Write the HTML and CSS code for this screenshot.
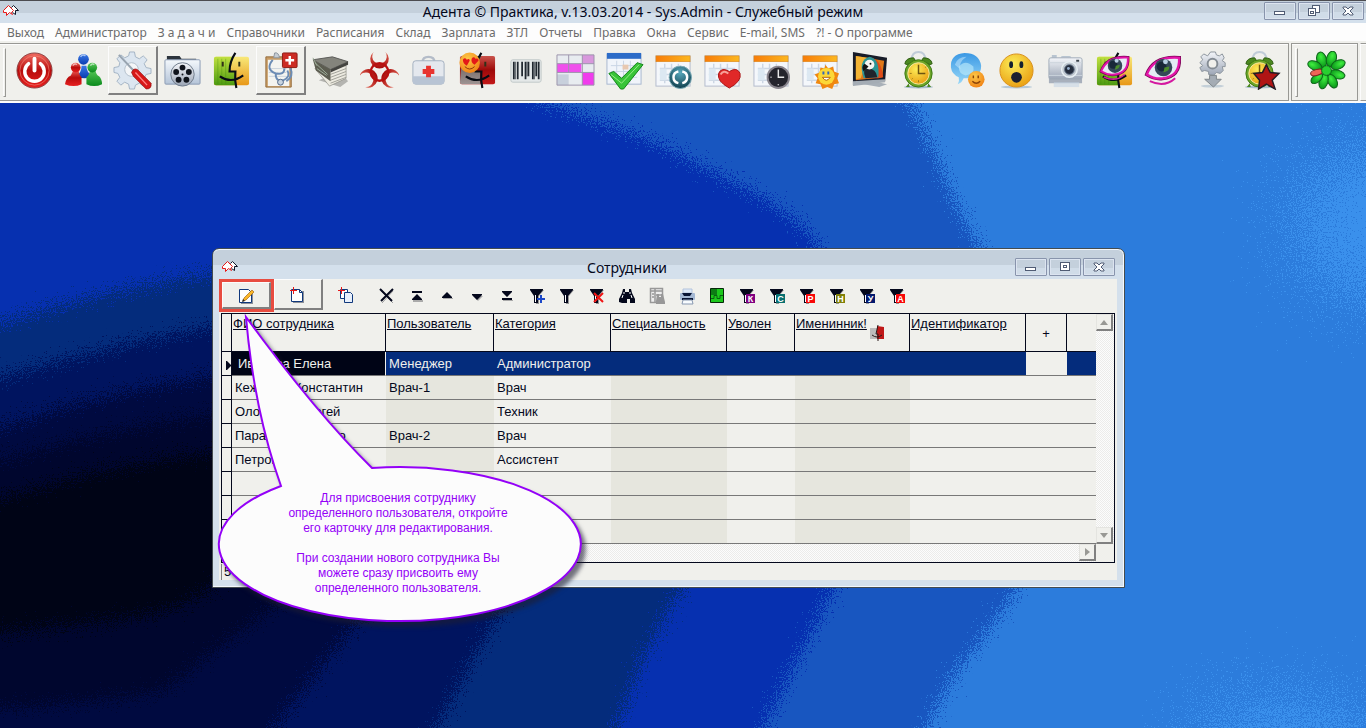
FILE: index.html
```html
<!DOCTYPE html>
<html lang="ru">
<head>
<meta charset="utf-8">
<title>Адента © Практика</title>
<link rel="stylesheet" href="styles.css">
</head>
<body>
<svg class="defs" width="0" height="0" aria-hidden="true">
  <defs>
    <linearGradient id="gRed" x1="0" y1="0" x2="0" y2="1"><stop offset="0" stop-color="#f06a60"/><stop offset=".5" stop-color="#b80c0c"/><stop offset="1" stop-color="#e82020"/></linearGradient>
    <linearGradient id="gBio" x1="0" y1="0" x2="0" y2="1"><stop offset="0" stop-color="#e06858"/><stop offset="1" stop-color="#a80808"/></linearGradient>
    <linearGradient id="gBlue" x1="0" y1="0" x2="0" y2="1"><stop offset="0" stop-color="#3a7ae8"/><stop offset="1" stop-color="#0a3cb0"/></linearGradient>
    <linearGradient id="gGreen" x1="0" y1="0" x2="0" y2="1"><stop offset="0" stop-color="#58c858"/><stop offset="1" stop-color="#0a8a1c"/></linearGradient>
    <linearGradient id="gSteel" x1="0" y1="0" x2="0" y2="1"><stop offset="0" stop-color="#f4f6fa"/><stop offset="1" stop-color="#9aa4b4"/></linearGradient>
    <linearGradient id="gFolder" x1="0" y1="0" x2="0" y2="1"><stop offset="0" stop-color="#f4f8fc"/><stop offset="1" stop-color="#b4c4d8"/></linearGradient>
    <linearGradient id="gLime" x1="0" y1="0" x2="0" y2="1"><stop offset="0" stop-color="#c0e040"/><stop offset="1" stop-color="#4c9a10"/></linearGradient>
    <linearGradient id="gGold" x1="0" y1="0" x2="0" y2="1"><stop offset="0" stop-color="#f8e878"/><stop offset="1" stop-color="#e89818"/></linearGradient>
    <linearGradient id="gDark" x1="0" y1="0" x2="0" y2="1"><stop offset="0" stop-color="#6a6660"/><stop offset="1" stop-color="#b8b8b8"/></linearGradient>
    <linearGradient id="gOrange" x1="0" y1="0" x2="1" y2="0"><stop offset="0" stop-color="#f87c08"/><stop offset="1" stop-color="#fcb820"/></linearGradient>
    <radialGradient id="gSmile" cx=".4" cy=".3" r=".8"><stop offset="0" stop-color="#fcec58"/><stop offset="1" stop-color="#e8980c"/></radialGradient>
    <radialGradient id="gLove" cx=".4" cy=".3" r=".8"><stop offset="0" stop-color="#fcc848"/><stop offset="1" stop-color="#f07c10"/></radialGradient>
    <radialGradient id="gTeal" cx=".5" cy=".3" r=".8"><stop offset="0" stop-color="#58a8bc"/><stop offset="1" stop-color="#06303e"/></radialGradient>
    <linearGradient id="gChat" x1="0" y1="0" x2="0" y2="1"><stop offset="0" stop-color="#3a98e4"/><stop offset="1" stop-color="#98d8f8"/></linearGradient>
    <radialGradient id="gClover" cx=".5" cy=".3" r=".7"><stop offset="0" stop-color="#40f040"/><stop offset="1" stop-color="#089418"/></radialGradient>
    <filter id="grain" x="0" y="0" width="1" height="1" color-interpolation-filters="sRGB">
      <feTurbulence type="fractalNoise" baseFrequency=".8" numOctaves="2" seed="3"/>
      <feDisplacementMap in="SourceGraphic" scale="56" xChannelSelector="R" yChannelSelector="G"/>
    </filter>
    <filter id="speckle" x="-.2" y="-.2" width="1.4" height="1.4" color-interpolation-filters="sRGB">
      <feTurbulence type="fractalNoise" baseFrequency=".8" numOctaves="2" seed="8"/>
      <feDisplacementMap in="SourceGraphic" scale="240" xChannelSelector="R" yChannelSelector="G"/>
    </filter>
  </defs>
  <symbol id="arrows" viewBox="0 0 18 14">
    <path d="M9.500 3.500l2-2 5 5h-3v4l-3-2" fill="#fff" stroke="#101828"/>
    <path d="M6.500 1.500l5 5-2 2 1 2-3-2-3 3v-3h-3v-2z" fill="#fff" stroke="#e81818"/>
  </symbol>
  <symbol id="face" viewBox="0 0 40 40">
    <path d="M24 2q-6 9-6 19h6q-1 9 1 17M8 26q12 8 24-1" fill="none" stroke="#080c14" stroke-width="2.200"/>
    <path d="M11 11v5M28 11v5" stroke="#303018" stroke-width="2"/>
  </symbol>
  <symbol id="finder" viewBox="0 0 40 40">
    <rect x="2" y="6" width="36" height="29" rx="2" fill="url(#gGold)"/>
    <path d="M4 6h19q-5 8-5 15h6q-1 8 0 14H4q-2 0-2-2V8q0-2 2-2z" fill="url(#gLime)"/>
    <path d="M6 8v26M10 8v26M14 8v26" stroke="#3c8408" stroke-opacity=".35"/>
  </symbol>
  <symbol id="calendar" viewBox="0 0 40 40">
    <rect x="2" y="5" width="35" height="31" fill="#f4f7fb" stroke="#b4bccc"/>
    <rect x="2" y="5" width="35" height="6" fill="url(#gOrange)" stroke="#d88820" stroke-width=".6"/>
    <path d="M6 18h27M6 24h27M6 30h27M11 13v20M18 13v20M25 13v20" stroke="#ccd6e4" stroke-width="1.5"/>
    <path d="M6 18h7v12H6z" fill="#dce8f2"/>
  </symbol>
  <symbol id="alarm" viewBox="0 0 40 40">
    <ellipse cx="20" cy="37" rx="15" ry="1.5" fill="#a8bccc"/>
    <path d="M13 9q0-8 7-8t7 8" fill="none" stroke="#c0ccd8" stroke-width="2"/>
    <path d="M6 13q1-6 9-6l2 3-9 4zM34 13q-1-6-9-6l-2 3 9 4z" fill="#4c8820" stroke="#2c5c10"/>
    <path d="M10 33l-3 4h4M30 33l3 4h-4" fill="#4c8820"/>
    <circle cx="20" cy="23" r="14" fill="#6ca428" stroke="#3c7814"/>
    <circle cx="20" cy="23" r="11" fill="url(#gSmile)" stroke="#f8e8a0"/>
    <path d="M20 14v9h7" fill="none" stroke="#6c5410" stroke-width="1.5"/>
    <path d="M20 30v2M11 23h2M27 17l1-1M13 29l1-1" stroke="#987818"/>
  </symbol>
  <symbol id="eye" viewBox="0 0 40 40">
    <path d="M3 24Q10 5 36 7q1 19-17 21Q11 29 3 24z" fill="#fff" stroke="#7c0858" stroke-width="4"/>
    <path d="M3 24Q10 5 36 7q1 19-17 21Q11 29 3 24z" fill="#e4ecf4" stroke="#e414a8" stroke-width="2.4"/>
    <circle cx="20" cy="17" r="9" fill="#344858"/>
    <circle cx="18" cy="16" r="5" fill="#182838"/><path d="M20 22q6-1 6-6l-5 1z" fill="#4c8c2c"/>
    <circle cx="22" cy="11" r="2.5" fill="#b8d0e4"/>
    <path d="M6 31q15 7 26-3" fill="none" stroke="#d418a0" stroke-width="2"/>
  </symbol>
  <symbol id="funnel" viewBox="0 0 20 20">
    <path d="M4 4h13l-5 6v8H9v-8z" fill="#989898"/>
    <path d="M3 3h13v1l-5 6v7H7v-7L3 4z" fill="#04081c"/>
    <path d="M8.500 9v7" stroke="#fff"/>
  </symbol>
  <symbol id="minimize" viewBox="0 0 30 16"><rect x="9.500" y="8.500" width="10" height="3" fill="#fff" stroke="#505c74"/></symbol>
  <symbol id="close" viewBox="0 0 30 16"><path d="M10 4h3l2 2 2-2h3v1l-3 3 3 3v1h-3l-2-2-2 2h-3v-1l3-3-3-3z" fill="#fff" stroke="#505c74"/></symbol>
</svg>

<header class="titlebar">
  <svg class="app-mark" width="18" height="14"><use href="#arrows"/></svg>
  <h1 class="caption">Адента © Практика, v.13.03.2014 - Sys.Admin - Служебный режим</h1>
  <div class="controls">
    <button class="control" aria-label="Свернуть"><svg width="30" height="16"><use href="#minimize"/></svg></button>
    <button class="control" aria-label="Восстановить"><svg width="30" height="16" viewBox="0 0 30 16" fill="#fff" stroke="#505c74"><rect x="13.500" y="2.500" width="7" height="7"/><rect x="9.500" y="5.500" width="7" height="7"/><rect x="11.500" y="8.500" width="3" height="2"/></svg></button>
    <button class="control" aria-label="Закрыть"><svg width="30" height="16"><use href="#close"/></svg></button>
  </div>
</header>

<nav class="menubar">
  <button>Выход</button><button>Администратор</button><button>З а д а ч и</button><button>Справочники</button><button>Расписания</button><button>Склад</button><button>Зарплата</button><button>ЗТЛ</button><button>Отчеты</button><button>Правка</button><button>Окна</button><button>Сервис</button><button>E-mail, SMS</button><button>?! - О программе</button>
</nav>

<div class="toolbars">
  <div class="toolbar main-tools">
    <span class="grip"></span>
    <button class="tool" aria-label="Выход"><svg viewBox="0 0 40 40"><circle cx="20" cy="20" r="18" fill="url(#gRed)" stroke="#8c4444"/><circle cx="20" cy="20" r="15" fill="none" stroke="#f49080" stroke-opacity=".6"/><path d="M14 13a10 10 0 1 0 12 0" fill="none" stroke="#fff" stroke-width="3.500" stroke-linecap="round"/><path d="M20 8v12" stroke="#fff" stroke-width="4" stroke-linecap="round"/></svg></button>
    <button class="tool" aria-label="Пользователи"><svg viewBox="0 0 40 40"><path d="M13 25q5-3 5-10h5q0 7 6 10-8 6-16 0z" fill="url(#gBlue)"/><circle cx="20" cy="8.500" r="5.500" fill="url(#gBlue)"/><path d="M1 34q1-7 6-9l3-6h5q0 5 3 8v7q-8 4-17 0z" fill="url(#gRed)"/><circle cx="12" cy="17" r="5" fill="url(#gRed)"/><path d="M23 34v-7q3-2 4-8h5q1 6 4 7 3 3 3 8-8 4-16 0z" fill="url(#gGreen)"/><circle cx="29" cy="17" r="5" fill="url(#gGreen)"/><path d="M17 6q2-3 5-1M9 15q2-3 4-1M27 15q2-3 4-1" stroke="#fff" stroke-opacity=".6" fill="none" stroke-width="1.500"/></svg></button>
    <button class="tool raised" aria-label="Настройки"><svg viewBox="0 0 40 40"><path d="M17 1h5l1 5 4 2 4-3 4 4-3 4 2 4 5 1v5l-5 1-2 4 3 4-4 4-4-3-4 2-1 4h-5l-1-5-4-2-4 3-4-4 3-4-2-4-4-1v-5l5-1 1-4-3-4 4-4 4 3 4-2z" fill="#dce6f0" stroke="#a4b4c4"/><circle cx="19" cy="19" r="7" fill="#f4f6f8" stroke="#b4c0cc"/><path d="M6 4l16 17" stroke="#98a4b0" stroke-width="2"/><path d="M19 22q2-5 6-3l14 14q1 6-5 6L21 26z" fill="#d81818" stroke="#8c0c0c" stroke-width=".7"/><path d="M23 22l12 13" stroke="#f88" stroke-width="1.300"/></svg></button>
    <button class="tool" aria-label="Видео"><svg viewBox="0 0 40 40"><path d="M4 5h13l2 3h15v5H4z" fill="#2c343c"/><rect x="2" y="9" width="36" height="25" rx="1" fill="url(#gFolder)" stroke="#8c9cb4"/><circle cx="20" cy="24" r="12" fill="url(#gSteel)" stroke="#707c8c"/><g fill="#10141c"><circle cx="20" cy="17" r="3"/><circle cx="26.500" cy="21.500" r="3"/><circle cx="24" cy="29.500" r="3"/><circle cx="16" cy="29.500" r="3"/><circle cx="13.500" cy="21.500" r="3"/><circle cx="20" cy="24" r="1"/></g></svg></button>
    <button class="tool" aria-label="Снимки"><svg viewBox="0 0 40 40"><use href="#finder"/><use href="#face"/></svg></button>
    <button class="tool raised" aria-label="Медицинская карта"><svg viewBox="0 0 40 40"><path d="M5 6h26v31H5z" fill="#c89c64" stroke="#946c3c"/><path d="M7 9h22v27H7z" fill="#f4f4f0"/><path d="M14 2q4-1 5 5h-6z" fill="#c4ccd4" stroke="#8c949c"/><path d="M8 18h18M8 22h18M8 26h18" stroke="#ccd4dc"/><path d="M12 9Q4 19 15 23q9 2 9-5M15 23q0 9 8 7 8-4 4-10M30 17Q34 26 26 31" fill="none" stroke="#6c8cb4" stroke-width="2"/><circle cx="20" cy="32" r="3" fill="#c8d4e0" stroke="#506888"/><rect x="22" y="2" width="15" height="15" rx="1" fill="#cc2c24" stroke="#8c1c14"/><path d="M29.500 5v9M25 9.500h9" stroke="#fff" stroke-width="2.500"/></svg></button>
    <button class="tool" aria-label="Документы"><svg viewBox="0 0 40 40"><path d="M8 30l22 7 8-6-8-10z" fill="#b4b4b0"/><path d="M4 18l15 18 17-8V15z" fill="#eceae0" stroke="#8c8c84" stroke-width=".7"/><path d="M20 30l16-6M20 33l16-6M20 27l16-6M20 24l16-6" stroke="#a0a098"/><path d="M2 9l20-3 16 5-18 8z" fill="#84847c" stroke="#5c5c58"/><path d="M2 9l18 10v12L5 20z" fill="#5c5c50"/><path d="M20 19l18-8v3l-18 8z" fill="#444440"/><path d="M4 12l13 12M6 18l10 7M2 7l4 8" stroke="#9cac98"/></svg></button>
    <button class="tool" aria-label="Биологическая опасность"><svg viewBox="0 0 40 40"><g fill="url(#gBio)"><path id="horn" d="M14 1A9.500 9.500 0 1 0 26 1 7.500 7.500 0 1 1 14 1z"/><use href="#horn" transform="rotate(120 20 21.500)"/><use href="#horn" transform="rotate(240 20 21.500)"/></g><circle cx="20" cy="21.500" r="9" fill="none" stroke="#b81010" stroke-width="2.500"/><circle cx="20" cy="21.500" r="2.500" fill="#f4e8e4"/></svg></button>
    <button class="tool" aria-label="Аптечка"><svg viewBox="0 0 40 40"><path d="M14 11q0-5 6-5t6 5" fill="none" stroke="#b4bcc8" stroke-width="2.500"/><rect x="4" y="10" width="32" height="24" rx="3" fill="#e4e8ee" stroke="#a4b0c0"/><path d="M4 26h32v5q0 3-3 3H7q-3 0-3-3z" fill="#b8c4d4"/><path d="M20 15v12M14 21h12" stroke="#e83430" stroke-width="5"/></svg></button>
    <button class="tool" aria-label="Настроение"><svg viewBox="0 0 40 40"><rect x="2" y="5" width="36" height="29" rx="2" fill="url(#gRed)"/><path d="M4 5h20q-5 8-5 16h4q-1 8 0 13H4q-2 0-2-2z" fill="url(#gDark)"/><rect x="2" y="5" width="36" height="29" rx="2" fill="#300" opacity=".2"/><use href="#face"/><circle cx="12" cy="12" r="10.500" fill="url(#gLove)"/><path d="M5 9q2-3 4 0 3-2 3 1l-3 5q-4-2-4-6zM14 8q2-3 4 0 3-1 3 2l-4 4q-4-2-3-6z" fill="#e41818"/><path d="M7 16q5 5 10 0" stroke="#8c3408" fill="none"/></svg></button>
    <button class="tool" aria-label="Штрихкод"><svg viewBox="0 0 40 40"><rect x="4" y="9" width="31" height="23" rx="2" fill="#e4e8e8" stroke="#c0c8c8"/><path d="M7 11v18M11 11v18M15.500 11v15M19 11v18M22 11v15M26.500 11v18M30 11v15M32.500 11v18" stroke="#202830" stroke-width="1.800"/><path d="M8.500 11v18M20.500 11v15M28 11v18" stroke="#485058"/></svg></button>
    <button class="tool" aria-label="Таблица"><svg viewBox="0 0 40 40"><rect x="1" y="4" width="38" height="31" fill="#e8ecf0"/><path d="M27 4h12v9H27z" fill="#d898dc"/><path d="M1 13h25v9H1z" fill="#f050ec"/><path d="M27 22h12v13H27z" fill="#f03cec"/><path d="M1 24h12v11H1z" fill="#c8d0dc"/><path d="M1 4h38v31H1zM13 4v18M27 4v31M1 13h38M1 22h38" fill="none" stroke="#9c94ac"/></svg></button>
    <button class="tool" aria-label="Задания"><svg viewBox="0 0 40 40"><rect x="2" y="3" width="35" height="31" fill="#f0f4fa" stroke="#a8b8d0"/><rect x="2" y="2" width="35" height="6" fill="#2c6cc8"/><path d="M6 15h27M6 21h27M6 27h27M12 10v22M19 10v22M26 10v22" stroke="#c8d4e4"/><path d="M18 14h6v5h-6z" fill="#e8c8b0"/><path d="M4 23l5-2 8 7 16-16 6 2-20 25h-3z" fill="#38c438" stroke="#148418"/><path d="M6 24l11 9 18-19" fill="none" stroke="#98ec88"/></svg></button>
    <button class="tool" aria-label="Код"><svg viewBox="0 0 40 40"><use href="#calendar"/><circle cx="27" cy="27" r="11.500" fill="url(#gTeal)" stroke="#7cacb8"/><path d="M25 21q-5 1-5 6t5 6M29 21q5 1 5 6t-5 6" fill="none" stroke="#fff" stroke-width="2.500"/></svg></button>
    <button class="tool" aria-label="Избранное"><svg viewBox="0 0 40 40"><use href="#calendar"/><path d="M27 38Q14 31 16 23q3-7 11-2 8-5 11 2 2 8-11 15z" fill="#e02828" stroke="#a81414"/><path d="M18 24q3-5 8-1" stroke="#f8a098" fill="none" stroke-width="2"/></svg></button>
    <button class="tool" aria-label="Расписание"><svg viewBox="0 0 40 40"><use href="#calendar"/><circle cx="27" cy="27" r="11" fill="#24242c" stroke="#88848c" stroke-width="2"/><path d="M27 19v8h6M27 34v1M19 27h1" stroke="#e8e8e8" fill="none" stroke-width="1.500"/></svg></button>
    <button class="tool" aria-label="Дежурства"><svg viewBox="0 0 40 40"><use href="#calendar"/><path d="M25 14l3 4 5-2 1 5 5 2-2 5 2 5-5 1-2 5-5-2-5 2-2-5-5-1 2-5-3-4 5-2 1-5 4 1z" fill="#f08810"/><circle cx="26" cy="26" r="8.500" fill="#fcd838"/><path d="M22 27q4 6 8 0z" fill="#fff" stroke="#b46408"/><path d="M23 21v3M28 21v3" stroke="#3468b8" stroke-width="2"/></svg></button>
    <button class="tool" aria-label="Монитор"><svg viewBox="0 0 40 40"><path d="M8 33l22 4 8-3-18-4z" fill="#a8b0b8"/><path d="M3 1l35 6-2 24-33 4z" fill="#181c28"/><path d="M3 31l33-2v3L3 36z" fill="#a4acb4"/><path d="M6 5l29 5-2 17L6 30z" fill="#e07818"/><path d="M6 5l12 2-7 21-5 1z" fill="#f4b434"/><path d="M15 28q-5-20 6-21 11 1 13 20l-5 1z" fill="#e04c18"/><path d="M14 28Q8 9 20 6q11 2 9 21z" fill="#2c9494"/><path d="M16 28q-4-9 2-10 9 0 10 9z" fill="#20242c"/><circle cx="20" cy="14" r="5" fill="#f4f4f0"/><path d="M15 13q-4 3-1 8l5-5z" fill="#141414"/><circle cx="21" cy="13" r="1" fill="#141414"/></svg></button>
    <button class="tool" aria-label="Будильник"><svg viewBox="0 0 40 40"><use href="#alarm"/></svg></button>
    <button class="tool" aria-label="Сообщения"><svg viewBox="0 0 40 40"><path d="M3 17Q2 3 17 2q15 0 17 13 0 12-14 13H16q-2 5-6 6 2-3 1-7-7-3-8-10z" fill="url(#gChat)"/><path d="M7 14q3-8 12-8-9 6-6 13z" fill="#b8e0fa" fill-opacity=".6"/><path d="M11 16q7-8 15 0 2 8-8 9-7-1-7-9z" fill="#c0ecfc" opacity=".6"/><circle cx="29" cy="29" r="8.500" fill="url(#gLove)"/><path d="M25 31q4 4 8 0M26 25v3M31 25v3" fill="none" stroke="#8c4408" stroke-width="1.500"/></svg></button>
    <button class="tool" aria-label="Уведомления"><svg viewBox="0 0 40 40"><ellipse cx="20" cy="37" rx="16" ry="1.500" fill="#b4c8d8"/><circle cx="20" cy="20" r="17" fill="url(#gSmile)" stroke="#d8901c"/><ellipse cx="14.500" cy="14" rx="2" ry="3.500" fill="#142030"/><ellipse cx="25" cy="14" rx="2" ry="3.500" fill="#142030"/><circle cx="20" cy="27" r="5.500" fill="#1c2030"/></svg></button>
    <button class="tool" aria-label="Камера"><svg viewBox="0 0 40 40"><path d="M3 28h34v5H3z" fill="#a8b0bc"/><path d="M8 32h26v5H8z" fill="#c4d4e4" opacity=".6"/><path d="M6 4h5v4H6zM15 7q0-2 2-2h7q2 0 2 2z" fill="#b8c4d0"/><rect x="3" y="7" width="34" height="22" rx="2" fill="url(#gSteel)" stroke="#a0acb8"/><path d="M3 12h34M3 25h34" stroke="#ccd4dc"/><path d="M31 9h3v2h-3z" fill="#384048"/><circle cx="24" cy="19" r="8" fill="#c0c8d0" stroke="#e8f0f4" stroke-width="1.500"/><circle cx="24" cy="19" r="5" fill="#242c3c" stroke="#68788c"/><circle cx="23" cy="18" r="1.500" fill="#94acc8"/></svg></button>
    <button class="tool" aria-label="Просмотр снимков"><svg viewBox="0 0 40 40"><use href="#finder"/><use href="#face"/><use href="#eye" x="4" y="1" width="33" height="33"/></svg></button>
    <button class="tool" aria-label="Просмотр"><svg viewBox="0 0 40 40"><use href="#eye"/></svg></button>
    <button class="tool" aria-label="Загрузка"><svg viewBox="0 0 40 40"><ellipse cx="20" cy="36" rx="12" ry="1.500" fill="#c4d0d8"/><path d="M18 1h5l1 3 3 1 3-2 2 4-2 3 3 2v4h-3l1 4-3 3-4-1-3 3-5-1v-3l-4-1-3 1-2-4 3-2-3-3 3-3-2-3 3-3 4 2z" fill="url(#gSteel)" stroke="#8c949c"/><circle cx="20" cy="13" r="5" fill="#f0f0ec" stroke="#848c94" stroke-width="2"/><path d="M17 25h7v4h5l-8 8-9-8h5z" fill="#a4acb4" stroke="#7c8488"/></svg></button>
    <button class="tool" aria-label="Напоминание"><svg viewBox="0 0 40 40"><use href="#alarm" x="-2"/><path d="M25 14l4 8 9 1-7 7 3 9-9-5-8 5 1-9-6-7 9-1z" fill="#b01414" stroke="#241c24" stroke-width="1.500"/></svg></button>
  </div>
  <div class="toolbar side-tools">
    <span class="grip"></span>
    <button class="tool" aria-label="Связь"><svg viewBox="0 0 40 40"><g fill="url(#gClover)" stroke="#0c6418"><ellipse cx="15" cy="9" rx="5" ry="8" transform="rotate(-14 15 9)"/><ellipse cx="25" cy="8" rx="5" ry="8" transform="rotate(16 25 8)"/><ellipse cx="32" cy="14" rx="4.500" ry="7.500" transform="rotate(66 32 14)"/><ellipse cx="31" cy="24" rx="4.500" ry="8" transform="rotate(105 31 24)"/><ellipse cx="26" cy="31" rx="4.500" ry="7.500" transform="rotate(-28 26 31)"/><ellipse cx="17" cy="31" rx="4.500" ry="8" transform="rotate(15 17 31)"/><ellipse cx="8" cy="15" rx="4.500" ry="7.500" transform="rotate(-68 8 15)"/><ellipse cx="10" cy="28" rx="4" ry="7" transform="rotate(50 10 28)"/></g><ellipse cx="10" cy="22" rx="3" ry="6.500" transform="rotate(74 10 22)" fill="#f06458" stroke="#842020"/><circle cx="20" cy="20" r="5" fill="#28d030" stroke="#0c6418"/></svg></button>
  </div>
  <div class="toolbar rest-tools"></div>
</div>

<main class="desktop">
  <svg class="wallpaper" viewBox="0 103 1366 625" preserveAspectRatio="none" aria-hidden="true">
    <g filter="url(#grain)">
      <rect x="-60" y="43" width="1500" height="745" fill="#2c7cdc"/>
      <path d="M-60 40H870L910 103C938 150 948 200 982 250 1050 430 1050 520 1018 587 985 640 945 675 928 728L900 790H-60z" fill="#1856c0"/>
      <path d="M-60 40H450L545 103 650 140 745 188Q795 215 816 242C910 400 865 510 834 587L802 650 763 728 730 790H-60z" fill="#0630b0"/>
      <path d="M-60 341L0 323Q110 288 213 274C500 232 740 390 681 587L646 650 616 728 590 790H-60z" fill="#042c7c"/>
      <path d="M-60 394L0 378Q110 344 213 327C420 292 600 460 492 625L436 728 400 790H-60z" fill="#00145f"/>
      <path d="M-60 445L0 427Q110 390 213 376C390 362 490 500 352 628L274 728 240 790H-60z" fill="#000a40"/>
      <path d="M-60 478L0 460Q100 430 213 414C350 400 400 520 270 610Q200 660 166 690 90 705-60 712z" fill="#00062e"/>
      <path d="M-60 515L0 499Q100 466 213 452C330 442 310 520 214 585 180 615 130 620 0 632H-60z" fill="#000416"/>
    </g>
    <g filter="url(#speckle)" fill="#3a90ec"><ellipse cx="1385" cy="225" rx="86" ry="75"/><ellipse cx="1285" cy="738" rx="90" ry="34"/></g>
  </svg>

  <section class="window" aria-labelledby="staff-title">
    <header class="window-head">
      <svg class="app-mark" width="18" height="14"><use href="#arrows"/></svg>
      <h2 class="caption" id="staff-title">Сотрудники</h2>
      <div class="controls">
        <button class="control" aria-label="Свернуть окно"><svg width="30" height="16"><use href="#minimize"/></svg></button>
        <button class="control" aria-label="Развернуть окно"><svg width="30" height="16" viewBox="0 0 30 16" fill="#fff" stroke="#505c74"><rect x="10.500" y="3.500" width="9" height="8"/><rect x="13.500" y="6.500" width="3" height="2"/></svg></button>
        <button class="control" aria-label="Закрыть окно"><svg width="30" height="16"><use href="#close"/></svg></button>
      </div>
    </header>
    <div class="window-body">
      <div class="actions">
        <div class="highlight"><button class="wide raised" aria-label="Изменить"><svg viewBox="0 0 20 20"><path d="M5 5h12v13H5z" fill="#8c9098"/><path d="M3.500 3.500h9l3 3v10h-12z" fill="#fff" stroke="#10387c"/><path d="M7 15l1-3 8-8 2 2-8 8z" fill="#fcb828" stroke="#a46818" stroke-width=".7"/><path d="M6 16l1-3 2 2z" fill="#222"/></svg></button></div>
        <button class="wide raised" aria-label="Добавить"><svg viewBox="0 0 20 20"><path d="M5 6h11v12H5z" fill="#8c9098"/><path d="M3.500 4.500h8l3 3v9h-11z" fill="#fff" stroke="#10387c"/><path d="M11.500 4.500v3h3" fill="none" stroke="#10387c"/><path d="M5.500 2v7M2 5.500h7" stroke="#e81818"/></svg></button>
        <button class="wide" aria-label="Копировать"><svg viewBox="0 0 20 20"><path d="M4.500 4.500h7v9h-7z" fill="#fff" stroke="#10387c"/><path d="M8.500 7.500h6l2 2v8h-8z" fill="#e8f0fc" stroke="#10387c"/><path d="M5.500 2v7M2 5.500h7" stroke="#e81818"/></svg></button>
        <button class="act" aria-label="Удалить"><svg viewBox="0 0 20 20"><path d="M4 5l12 12M16 5L5 17" stroke="#a0a0a0"/><path d="M3 3l12 12M16 3L4 15" stroke="#04081c" stroke-width="2"/></svg></button>
        <button class="act" aria-label="В начало"><svg viewBox="0 0 20 20"><path d="M6 14h10v2H6z" fill="#aaa"/><path d="M5 5h10v2H5zM10 8l5 5v1H5v-1z" fill="#04081c"/></svg></button>
        <button class="act" aria-label="Вверх"><svg viewBox="0 0 20 20"><path d="M6 12h10v1H6z" fill="#aaa"/><path d="M10 6l5 5v1H5v-1z" fill="#04081c"/></svg></button>
        <button class="act" aria-label="Вниз"><svg viewBox="0 0 20 20"><path d="M6 10h10l-5 5z" fill="#aaa"/><path d="M5 8h10v1l-5 5-5-5z" fill="#04081c"/></svg></button>
        <button class="act" aria-label="В конец"><svg viewBox="0 0 20 20"><path d="M6 14h10v1H6z" fill="#aaa"/><path d="M5 5h10v1l-5 5-5-5zM5 12h10v2H5z" fill="#04081c"/></svg></button>
        <button class="act" aria-label="Добавить фильтр"><svg viewBox="0 0 20 20"><use href="#funnel"/><path d="M14 9v8M10 13h8" stroke="#1c48c8" stroke-width="2"/></svg></button>
        <button class="act" aria-label="Фильтр"><svg viewBox="0 0 20 20"><use href="#funnel"/></svg></button>
        <button class="act" aria-label="Снять фильтр"><svg viewBox="0 0 20 20"><use href="#funnel"/><path d="M7 7l9 9M16 7l-9 9" stroke="#f01414" stroke-width="2"/></svg></button>
        <button class="act" aria-label="Найти"><svg viewBox="0 0 20 20"><path d="M6 3h2v3h4V3h2l1 4 3 6v4h-5v-4h-3v4H5l-3-1v-3l3-6z" fill="#04081c"/><path d="M7 6v2M13 6v2M5 12l1-3M14 9l1 3" stroke="#fff"/></svg></button>
        <button class="act" aria-label="Найти в таблице" disabled><svg viewBox="0 0 20 20"><path d="M3.500 2.500h12v14h-12zM4 5h11M8 3v13M9 9h5M5 8h2M5 11h2" fill="#eee" stroke="#989898" stroke-width="1.500"/><path d="M10 8h2v3h2V8h2l2 8v2H9v-3z" fill="#989898"/></svg></button>
        <button class="act" aria-label="Печать"><svg viewBox="0 0 20 20"><path d="M6 3h9v4H6z" fill="#dce8f8" stroke="#b4c4dc"/><rect x="3" y="7" width="15" height="7" rx="1" fill="#a4b8d4"/><path d="M5 7h10l-2 3H7zM5 12h11v2H5z" fill="#081434"/><path d="M6 14h9l1 4H5z" fill="#f8fcff" stroke="#8898b0"/></svg></button>
        <button class="act" aria-label="График"><svg viewBox="0 0 20 20"><path d="M3.500 2.500h13v14h-13z" fill="#1cc81c" stroke="#042808"/><path d="M4 3h6v6H4z" fill="#0c7c14"/><path d="M4 12.500h3v-3h3v3h3v-3h3" fill="none" stroke="#086010"/></svg></button>
        <button class="act" aria-label="Фильтр К"><svg viewBox="0 0 20 20"><use href="#funnel"/><rect x="9" y="8" width="9" height="9" fill="#800080"/><text x="13.500" y="16">К</text></svg></button>
        <button class="act" aria-label="Фильтр С"><svg viewBox="0 0 20 20"><use href="#funnel"/><rect x="9" y="8" width="9" height="9" fill="#087070"/><text x="13.500" y="16">С</text></svg></button>
        <button class="act" aria-label="Фильтр Р"><svg viewBox="0 0 20 20"><use href="#funnel"/><rect x="9" y="8" width="9" height="9" fill="#f80808"/><text x="13.500" y="16">Р</text></svg></button>
        <button class="act" aria-label="Фильтр Н"><svg viewBox="0 0 20 20"><use href="#funnel"/><rect x="9" y="8" width="9" height="9" fill="#808008"/><text x="13.500" y="16">Н</text></svg></button>
        <button class="act" aria-label="Фильтр У"><svg viewBox="0 0 20 20"><use href="#funnel"/><rect x="9" y="8" width="9" height="9" fill="#04186c"/><text x="13.500" y="16">У</text></svg></button>
        <button class="act" aria-label="Фильтр А"><svg viewBox="0 0 20 20"><use href="#funnel"/><rect x="9" y="8" width="9" height="9" fill="#f80808"/><text x="13.500" y="16">А</text></svg></button>
      </div>

      <div class="grid">
        <table class="staff">
          <colgroup><col class="w-mark"><col class="w-name"><col class="w-user"><col class="w-category"><col class="w-special"><col class="w-fired"><col class="w-birthday"><col class="w-ident"><col class="w-plus"><col></colgroup>
          <thead>
            <tr><th class="mark"></th><th>ФИО сотрудника</th><th>Пользователь</th><th>Категория</th><th>Специальность</th><th>Уволен</th><th><span class="birthday">Именинник!<svg width="16" height="18" viewBox="0 0 16 18"><path d="M1 4h7v11H1z" fill="#bcbcbc"/><path d="M8 2l7 1v12H8z" fill="#c01818"/><path d="M9 1l-2 9h2v7M3 11q5 4 10 0" fill="none" stroke="#281818"/></svg></span></th><th>Идентификатор</th><th class="plus">+</th><th class="tail"></th></tr>
          </thead>
          <tbody>
            <tr class="selected"><td class="mark"><svg width="5" height="9" viewBox="0 0 5 9"><path d="M0 0h1l4 4v1L1 9H0z" fill="#04081c"/></svg></td><td>Иванова Елена</td><td>Менеджер</td><td>Администратор</td><td></td><td></td><td></td><td></td><td class="plain"></td><td></td></tr>
            <tr><td class="mark"></td><td>Кежашев Константин</td><td>Врач-1</td><td>Врач</td><td></td><td></td><td></td><td></td><td></td><td></td></tr>
            <tr><td class="mark"></td><td>Оловянко Сергей</td><td></td><td>Техник</td><td></td><td></td><td></td><td></td><td></td><td></td></tr>
            <tr><td class="mark"></td><td>Параманов Марко</td><td>Врач-2</td><td>Врач</td><td></td><td></td><td></td><td></td><td></td><td></td></tr>
            <tr><td class="mark"></td><td>Петров Иван</td><td></td><td>Ассистент</td><td></td><td></td><td></td><td></td><td></td><td></td></tr>
            <tr><td class="mark"></td><td></td><td></td><td></td><td></td><td></td><td></td><td></td><td></td><td></td></tr>
            <tr><td class="mark"></td><td></td><td></td><td></td><td></td><td></td><td></td><td></td><td></td><td></td></tr>
            <tr><td class="mark"></td><td></td><td></td><td></td><td></td><td></td><td></td><td></td><td></td><td></td></tr>
          </tbody>
        </table>
        <div class="scroll vertical">
          <button aria-label="Прокрутить вверх"><svg width="8" height="5" viewBox="0 0 8 5"><path d="M4 0l4 5H0z"/></svg></button>
          <button aria-label="Прокрутить вниз"><svg width="8" height="5" viewBox="0 0 8 5"><path d="M0 0h8L4 5z"/></svg></button>
        </div>
        <div class="scroll horizontal">
          <button aria-label="Прокрутить влево"><svg width="5" height="8" viewBox="0 0 5 8"><path d="M5 0v8L0 4z"/></svg></button>
          <button aria-label="Прокрутить вправо"><svg width="5" height="8" viewBox="0 0 5 8"><path d="M0 0l5 4-5 4z"/></svg></button>
        </div>
      </div>
      <footer class="status">5</footer>
    </div>
  </section>

  <aside class="callout">
    <svg class="bubble" width="384" height="324" viewBox="213 311 384 324" aria-hidden="true"><path d="M247 317Q318 414 373 468A181 77 0 1 1 282 486Q255 410 247 317z"/></svg>
    <div class="callout-text">
      <p>Для присвоения сотруднику определенного пользователя, откройте его карточку для редактирования.</p>
      <p>При создании нового сотрудника Вы можете сразу присвоить ему определенного пользователя.</p>
    </div>
  </aside>
</main>
</body>
</html>
```
FILE: styles.css
```css
* { box-sizing: border-box; }

body {
  margin: 0;
  min-height: 100vh;
  display: flex;
  flex-direction: column;
  overflow: hidden;
  background: #f0f0ec;
  color: #04081c;
  font: 13px "Liberation Sans", Arial, sans-serif;
}

button {
  margin: 0;
  padding: 0;
  border: 0;
  background: none;
  color: inherit;
  font: inherit;
}

button svg { display: block; }
.defs { position: absolute; }

/* Title bars */
.titlebar {
  display: grid;
  grid-template-columns: 18px 1fr 98px;
  height: 23px;
  padding: 0 2px;
  border-top: 1px solid #4c4c50;
  background: linear-gradient(#c4d0dc 12px, #d4e0ec 12px);
}

.app-mark { margin-top: 3px; }

.caption {
  margin: 0;
  text-align: center;
  white-space: nowrap;
  font: 14px/21px "Noto Sans", "Open Sans", sans-serif;
}

.controls {
  display: flex;
  justify-content: flex-end;
  gap: 2px;
  padding-top: 1px;
}

.control {
  flex: none;
  width: 32px;
  height: 18px;
  border: 1px solid #8894ac;
  border-radius: 1px;
  background: linear-gradient(#c4d0dc 9px, #d0dce8 9px);
  box-shadow: inset 0 0 0 1px #dce4f0;
}

/* Menu */
.menubar {
  display: flex;
  gap: 11px;
  height: 20px;
  padding-left: 7px;
  background: linear-gradient(#fdfdfd 18px, #f0f0ec 18px);
  color: #6c6c6c;
  font: 12px/20px "Noto Sans", "Open Sans", sans-serif;
  white-space: nowrap;
}

/* Toolbars */
.toolbars {
  display: flex;
  gap: 2px;
  height: 60px;
  border-bottom: 2px solid #fcfcfc;
}

.toolbar {
  display: flex;
  border: 1px solid #989894;
  border-left-color: #fcfcfc;
  box-shadow: inset 0 1px #fcfcfc;
}

.main-tools { flex: 1; border-left: 0; }
.side-tools { width: 67px; border-left-color: #989894; }
.rest-tools { width: 6px; border-right: 0; }

.grip {
  width: 3px;
  margin: 4px 4px 3px 3px;
  border: 1px solid #fcfcfc;
  border-right-color: #989894;
  border-bottom-color: #989894;
}

.tool {
  flex: 0 0 49px;
  height: 49px;
  margin-top: 2px;
  padding: 5px;
}

.tool svg {
  width: 39px;
  height: 39px;
}

.raised {
  border: 1px solid #fcfcfc;
  border-right: 2px solid #808080;
  border-bottom: 2px solid #808080;
}

.tool.raised { padding: 4px; }

/* Desktop */
.desktop {
  position: relative;
  flex: 1;
  overflow: hidden;
  background: #0630b0;
}

.wallpaper {
  position: absolute;
  width: 100%;
  height: 100%;
}

.window {
  position: absolute;
  left: 212px;
  top: 145px;
  width: 913px;
  padding: 0 7px 7px 6px;
  border: 1px solid #444c50;
  border-radius: 7px 7px 0 0;
  background: linear-gradient(#c4d0dc 16px, #d4e0ec 16px);
  box-shadow: inset 0 1px #f4f8fc, inset 0 -1px #f4f8fc, inset -1px 0 #f4f8fc;
}

.window-head {
  display: grid;
  grid-template-columns: 18px 1fr 100px;
  height: 30px;
  padding: 8px 2px 0 2px;
}

.window-head .app-mark { margin-top: 3px; }
.window-head .controls { padding-top: 1px; }

.window-body {
  background: #f0f0ec;
}

/* Window tool strip */
.actions {
  display: flex;
  height: 34px;
}

.highlight {
  width: 55px;
  height: 33px;
  border: 3px solid #e84c40;
}

.highlight .wide { height: 27px; }

.wide {
  width: 49px;
  height: 31px;
  padding: 1px 13px 0;
}

.act {
  width: 30px;
  height: 33px;
  padding: 0 5px;
}

.actions svg {
  width: 20px;
  height: 20px;
}

.actions text {
  fill: #fff;
  font: bold 9px "Liberation Sans", Arial, sans-serif;
  text-anchor: middle;
}

/* Staff grid */
.grid {
  display: grid;
  grid-template-columns: 1fr 18px;
  margin: 0 2px;
  border: 1px solid #04081c;
}

.staff {
  width: 100%;
  table-layout: fixed;
  border-spacing: 0;
}

.w-mark { width: 10px; }
.w-name { width: 154px; }
.w-user { width: 108px; }
.w-category { width: 117px; }
.w-special { width: 116px; }
.w-fired { width: 68px; }
.w-birthday { width: 115px; }
.w-ident { width: 116px; }
.w-plus { width: 41px; }

.staff th {
  height: 38px;
  padding: 2px 1px 0;
  border-right: 1px solid #04081c;
  border-bottom: 1px solid #04081c;
  text-align: left;
  vertical-align: top;
  font-weight: normal;
  text-decoration: underline;
  white-space: nowrap;
}

.staff .plus {
  text-align: center;
  vertical-align: middle;
  text-decoration: none;
}

.staff .tail { border-right: 0; }

.birthday { display: flex; gap: 2px; }
.birthday svg { margin-top: 8px; }

.staff td {
  height: 24px;
  padding: 0 3px;
  border-bottom: 1px solid #787878;
  white-space: nowrap;
}

.staff td:nth-child(3),
.staff td:nth-child(5),
.staff td:nth-child(7) { background: #e6e6de; }

.staff .mark {
  padding: 0;
  border-right: 1px solid #04081c;
  border-bottom-color: #04081c;
}

.mark svg { display: block; margin: 4px 0 0 4px; }

.staff .selected td {
  background: #042c7c;
  color: #f0f0ec;
}

.staff .selected td:nth-child(2) {
  padding-left: 6px;
  border-right: 1px solid #f0f0ec;
  background: #000416;
}

.staff .selected .mark,
.staff .selected .plain { background: #f0f0ec; }

.scroll {
  display: flex;
  justify-content: space-between;
  background: repeating-conic-gradient(#fcfcfc 0 25%, #ececea 0 50%) 0 0 / 2px 2px;
}

.vertical { flex-direction: column; }
.horizontal { height: 18px; }

.scroll button {
  display: grid;
  place-items: center;
  width: 17px;
  height: 17px;
  border: 1px solid #e4e4e0;
  border-right: 2px solid #808080;
  border-bottom: 2px solid #808080;
  background: #f0f0ec;
  fill: #989894;
}

.status {
  width: 40%;
  height: 16px;
  margin: 1px 2px 0;
  padding-left: 2px;
  border-left: 1px solid #808080;
  line-height: 16px;
}

/* Hint balloon */
.callout {
  position: absolute;
  left: 212px;
  top: 208px;
  width: 384px;
  color: #9400f8;
}

.bubble {
  display: block;
  fill: #fcfcfc;
  stroke: #9400f8;
  stroke-width: 2;
  filter: drop-shadow(4px 5px 2px rgba(30, 30, 50, .6));
}

.callout-text {
  position: absolute;
  left: 70px;
  top: 180px;
  width: 232px;
  text-align: center;
  font-size: 12px;
  line-height: 15px;
}

.callout-text p { margin: 0 0 15px; }
```
